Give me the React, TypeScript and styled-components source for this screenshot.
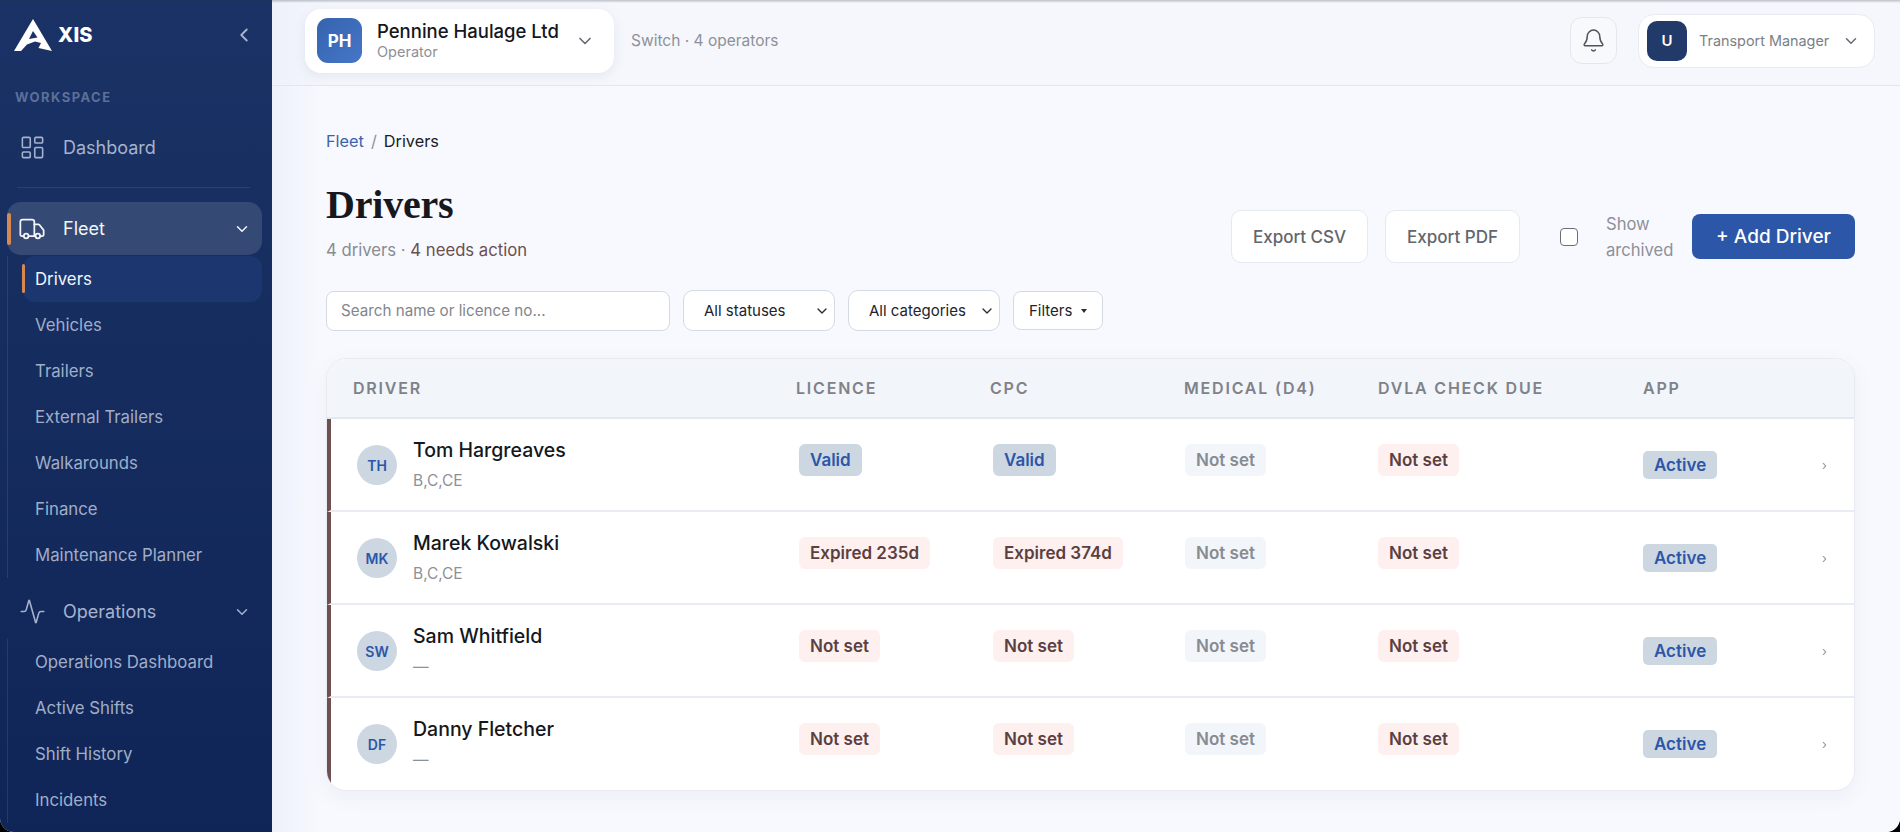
import React from 'react'
import styled, { createGlobalStyle } from 'styled-components'
import { Activity, Bell, ChevronDown, ChevronLeft, LayoutDashboard, Truck } from 'lucide-react'

const GlobalStyle = createGlobalStyle`
  html, body {
    margin: 0;
    padding: 0;
    height: 100%;
    background: #000;
    overflow: hidden;
  }
  * { box-sizing: border-box; }
  body { font-family: Inter, "Noto Sans", sans-serif; }
`

const Shell = styled.div`
  position: relative;
  display: flex;
  width: 1900px;
  height: 832px;
  overflow: hidden;
  border-radius: 0 0 14px 14px;
  background: #f8f9fe;

  &::after {
    content: '';
    position: absolute;
    inset: 0 0 auto 0;
    height: 3px;
    background: linear-gradient(rgba(40, 50, 70, 0.28), rgba(40, 50, 70, 0));
  }
`

const Sidebar = styled.aside`
  flex: 0 0 272px;
  display: flex;
  flex-direction: column;
  padding: 0 10px 0 7px;
  background: linear-gradient(180deg, #1a3265 0%, #102557 100%);
  overflow: hidden;
`

const Brand = styled.div`
  display: flex;
  flex: 0 0 66px;
  align-items: center;
  justify-content: space-between;
  padding: 4px 7px 0 7px;
  color: #fff;
`

const BrandLogo = styled.div`
  display: flex;
  align-items: center;
  gap: 5px;
`

const BrandName = styled.span`
  font-size: 20px;
  font-weight: 800;
  letter-spacing: 0.2px;
`

const Collapse = styled.span`
  display: flex;
  color: #a9b5cd;
`

const SectionLabel = styled.div`
  margin: 23px 0 16px;
  padding-left: 8px;
  font-size: 13px;
  line-height: 16px;
  font-weight: 700;
  letter-spacing: 1.45px;
  color: #5c7099;
`

const TopItem = styled.div<{ $active?: boolean }>`
  position: relative;
  display: flex;
  flex: 0 0 53px;
  align-items: center;
  padding-left: 11px;
  border-radius: 14px;
  font-size: 18px;
  color: ${({ $active }) => ($active ? '#f3f5fa' : '#a7b3cd')};
  background: ${({ $active }) => ($active ? 'rgba(255, 255, 255, 0.13)' : 'transparent')};

  &::before {
    content: ${({ $active }) => ($active ? "''" : 'none')};
    position: absolute;
    left: 0;
    top: 11px;
    width: 4px;
    height: 32px;
    border-radius: 2px;
    background: #d9894f;
  }
`

const TopIcon = styled.span`
  display: flex;
  justify-content: center;
  width: 28px;
  margin-right: 17px;
`

const Caret = styled.span`
  margin-left: auto;
  margin-right: 11px;
  display: flex;
`

const Divider = styled.div`
  flex: 0 0 1px;
  margin: 13px 12px 14px 10px;
  background: rgba(255, 255, 255, 0.09);
`

const SubList = styled.div`
  display: flex;
  flex-direction: column;
  flex-shrink: 0;
  margin: 1px 0 7px;
  padding-left: 15px;
  border-left: 1px solid rgba(255, 255, 255, 0.09);
`

const SubItem = styled.div<{ $active?: boolean }>`
  position: relative;
  display: flex;
  flex: 0 0 46px;
  align-items: center;
  padding-left: 12px;
  border-radius: 12px;
  font-size: 16.8px;
  color: ${({ $active }) => ($active ? '#f3f5fa' : '#a0aec8')};
  background: ${({ $active }) => ($active ? '#1c3770' : 'transparent')};

  &::before {
    content: ${({ $active }) => ($active ? "''" : 'none')};
    position: absolute;
    left: -1px;
    top: 8px;
    width: 3px;
    height: 29px;
    border-radius: 2px;
    background: #d9894f;
  }
`

const Main = styled.div`
  flex: 1;
  display: flex;
  flex-direction: column;
  min-width: 0;
  background: linear-gradient(90deg, #eef1fb 0, #f8f9fe 50px);
`

const Topbar = styled.header`
  display: flex;
  align-items: center;
  flex: 0 0 86px;
  padding: 0 25px 4px 33px;
  background: linear-gradient(90deg, #eef1fa 0, #f5f7fc 60px);
  border-bottom: 1px solid #e2e6ef;
`

const Switcher = styled.div`
  display: flex;
  align-items: center;
  width: 309px;
  height: 64px;
  padding: 0 19px 0 12px;
  border-radius: 16px;
  background: #fff;
  box-shadow: 0 3px 12px rgba(70, 90, 140, 0.1);
`

const SwitcherAvatar = styled.div`
  display: flex;
  align-items: center;
  justify-content: center;
  width: 45px;
  height: 45px;
  margin-right: 15px;
  border-radius: 11px;
  background: linear-gradient(135deg, #3563ae, #4676c8);
  color: #fff;
  font-size: 17px;
  font-weight: 700;
`

const SwitcherText = styled.div`
  flex: 1;
  display: flex;
  flex-direction: column;
`

const SwitcherName = styled.span`
  font-size: 18.5px;
  line-height: 23px;
  font-weight: 500;
  color: #15171c;
`

const SwitcherRole = styled.span`
  font-size: 14.5px;
  line-height: 18px;
  color: #8d9098;
`

const SwitchHint = styled.span`
  margin-left: 17px;
  font-size: 15.5px;
  color: #8d9199;
`

const TopRight = styled.div`
  margin-left: auto;
  display: flex;
  align-items: center;
  gap: 21px;
`

const BellButton = styled.div`
  display: flex;
  align-items: center;
  justify-content: center;
  width: 47px;
  height: 47px;
  border: 1px solid #e3e7ef;
  border-radius: 12px;
  background: #f8f9fd;
  color: #4f535b;
`

const ProfileButton = styled.div`
  display: flex;
  align-items: center;
  width: 237px;
  height: 54px;
  padding: 0 14px 0 8px;
  border: 1px solid #e8ebf2;
  border-radius: 16px;
  background: #fff;
  color: #777b83;
`

const ProfileAvatar = styled.div`
  display: flex;
  align-items: center;
  justify-content: center;
  width: 40px;
  height: 40px;
  margin-right: 12px;
  border-radius: 10px;
  background: #213a69;
  color: #fff;
  font-size: 15px;
  font-weight: 600;
`

const ProfileName = styled.span`
  flex: 1;
  font-size: 14.4px;
  color: #7b7f87;
`

const Content = styled.main`
  flex: 1;
  display: flex;
  flex-direction: column;
  padding: 44px 45px 0 54px;
`

const Breadcrumb = styled.nav`
  display: flex;
  gap: 7px;
  font-size: 16.3px;
  line-height: 22px;
  color: #1b1d22;
`

const CrumbLink = styled.span`
  color: #3b62ab;
`

const CrumbSep = styled.span`
  color: #8d9199;
`

const PageHead = styled.div`
  display: flex;
  align-items: flex-end;
  justify-content: space-between;
  margin-top: 28px;
`

const PageTitle = styled.h1`
  margin: 0;
  font-family: "Liberation Serif", serif;
  font-size: 40px;
  line-height: 50px;
  font-weight: 700;
  letter-spacing: -0.2px;
  color: #16181d;
`

const PageSub = styled.div`
  margin-top: 8px;
  font-size: 16.7px;
  line-height: 24px;
  color: #888b92;
`

const NeedsAction = styled.span`
  color: #6b4f50;
`

const Actions = styled.div`
  display: flex;
  align-items: center;
  gap: 17px;
  margin-bottom: -1px;
`

const GhostButton = styled.button`
  height: 53px;
  padding: 0 21px;
  border: 1px solid #e6e9f0;
  border-radius: 10px;
  background: #fff;
  font: 500 17px Inter, sans-serif;
  color: #63666d;
`

const ArchivedToggle = styled.label`
  display: flex;
  align-items: center;
  margin-left: 23px;
  margin-right: -1px;
`

const CheckBox = styled.span`
  width: 18px;
  height: 18px;
  margin-right: 28px;
  border: 1.5px solid #6b6e75;
  border-radius: 4px;
  background: #fff;
`

const ArchivedText = styled.span`
  width: 70px;
  font-size: 16.6px;
  line-height: 26px;
  color: #8d9098;
`

const PrimaryButton = styled.button`
  height: 45px;
  width: 163px;
  border: 0;
  border-radius: 8px;
  background: #2c56a8;
  font: 500 19px Inter, sans-serif;
  color: #fff;
`

const FilterRow = styled.div`
  display: flex;
  align-items: center;
  gap: 13px;
  margin-top: 28px;
`

const SearchBox = styled.div`
  display: flex;
  align-items: center;
  width: 344px;
  height: 40px;
  padding-left: 14px;
  border: 1px solid #d5d9e3;
  border-radius: 8px;
  background: #fff;
  font-size: 15.2px;
  color: #83868d;
`

const FilterSelect = styled.div<{ $width: number }>`
  display: flex;
  align-items: center;
  justify-content: space-between;
  width: ${({ $width }) => $width}px;
  height: 41px;
  padding: 0 4px 0 20px;
  border: 1px solid #d5d9e3;
  border-radius: 10px;
  background: #fff;
  font-size: 15px;
  color: #22242a;
`

const FilterButton = styled.div`
  display: flex;
  align-items: center;
  gap: 9px;
  height: 39px;
  padding: 0 15px;
  border: 1px solid #d5d9e3;
  border-radius: 8px;
  background: #fff;
  font-size: 15px;
  color: #22242a;
`

const FilterCaret = styled.span`
  width: 0;
  height: 0;
  border-left: 3.5px solid transparent;
  border-right: 3.5px solid transparent;
  border-top: 4px solid #2b2d33;
`

const TableCard = styled.section`
  margin-top: 27px;
  border: 1px solid #e8ebf2;
  border-radius: 20px;
  background: #fff;
  box-shadow: 0 6px 20px rgba(80, 100, 160, 0.07);
  overflow: hidden;
`

const HeadRow = styled.div`
  display: grid;
  grid-template-columns: 443px 194px 194px 194px 265px 1fr 48px;
  align-items: center;
  height: 60px;
  background: #f2f5fa;
  border-bottom: 2px solid #e2e7f0;
`

const HeadCell = styled.div`
  padding-left: 26px;
  font-size: 16px;
  font-weight: 600;
  letter-spacing: 1.8px;
  color: #7f8289;
`

const BodyRow = styled.div`
  display: grid;
  grid-template-columns: 439px 194px 192px 193px 268px 1fr 46px;
  height: 93px;
  border-left: 4px solid #6e4f52;
  border-bottom: 2px solid #e9ecf2;

  &:last-child {
    height: 92px;
    border-bottom: 0;
  }
`

const DriverCell = styled.div`
  display: flex;
  align-items: flex-start;
  padding: 26px 0 0 26px;
`

const Initials = styled.div`
  display: flex;
  align-items: center;
  justify-content: center;
  width: 40px;
  height: 40px;
  margin-right: 16px;
  border-radius: 50%;
  background: #ccd7e2;
  color: #2c56a8;
  font-size: 14px;
  font-weight: 600;
`

const DriverText = styled.div`
  display: flex;
  flex-direction: column;
  margin-top: -10px;
`

const DriverName = styled.span`
  font-size: 19.5px;
  line-height: 30px;
  font-weight: 500;
  color: #15171c;
`

const DriverCats = styled.span`
  margin-top: 2px;
  font-size: 15.5px;
  line-height: 28px;
  color: #8d9098;
`

const StatusCell = styled.div`
  padding: 25px 0 0 29px;
`

const tones = {
  valid: { bg: '#ccd7e2', fg: '#2c56a8' },
  danger: { bg: '#fdf0ef', fg: '#5b3f42' },
  muted: { bg: '#f2f5fa', fg: '#888b92' },
}

const Badge = styled.span<{ $tone: keyof typeof tones }>`
  display: inline-flex;
  align-items: center;
  height: 32px;
  padding: 0 11px;
  border-radius: 6px;
  font-size: 17px;
  font-weight: 600;
  background: ${({ $tone }) => tones[$tone].bg};
  color: ${({ $tone }) => tones[$tone].fg};
`

const AppCell = styled.div`
  display: flex;
  align-items: center;
  padding-left: 26px;
`

const AppBadge = styled.span`
  display: inline-flex;
  align-items: center;
  height: 28px;
  padding: 0 11px;
  border-radius: 5px;
  background: #ccd7e2;
  color: #2c56a8;
  font-size: 17px;
  font-weight: 600;
`

const RowArrow = styled.div`
  display: flex;
  align-items: center;
  padding-left: 14px;
  color: #777a82;
  font-size: 13px;
  font-weight: 300;
`

const AxisMark = () => (
  <svg width="39" height="33" viewBox="0 0 39 33" aria-hidden="true">
    <path
      fill="#fff"
      fillRule="evenodd"
      d="M19 0 38 32 24.5 29 27 24 21 22.5 13 25.5 7 32 0 32ZM19 12 15 20 23.5 18.5Z"
    />
  </svg>
)

const fleetItems = ['Vehicles', 'Trailers', 'External Trailers', 'Walkarounds', 'Finance', 'Maintenance Planner']
const opsItems = ['Operations Dashboard', 'Active Shifts', 'Shift History', 'Incidents']

type Tone = keyof typeof tones

type Driver = {
  initials: string
  name: string
  cats: string
  licence: [string, Tone]
  cpc: [string, Tone]
}

const drivers: Driver[] = [
  { initials: 'TH', name: 'Tom Hargreaves', cats: 'B,C,CE', licence: ['Valid', 'valid'], cpc: ['Valid', 'valid'] },
  { initials: 'MK', name: 'Marek Kowalski', cats: 'B,C,CE', licence: ['Expired 235d', 'danger'], cpc: ['Expired 374d', 'danger'] },
  { initials: 'SW', name: 'Sam Whitfield', cats: '—', licence: ['Not set', 'danger'], cpc: ['Not set', 'danger'] },
  { initials: 'DF', name: 'Danny Fletcher', cats: '—', licence: ['Not set', 'danger'], cpc: ['Not set', 'danger'] },
]

export default function App() {
  return (
    <Shell>
      <GlobalStyle />
      <Sidebar>
        <Brand>
          <BrandLogo>
            <AxisMark />
            <BrandName>XIS</BrandName>
          </BrandLogo>
          <Collapse>
            <ChevronLeft size={22} strokeWidth={2} />
          </Collapse>
        </Brand>
        <SectionLabel>WORKSPACE</SectionLabel>
        <TopItem>
          <TopIcon>
            <LayoutDashboard size={27} strokeWidth={1.4} />
          </TopIcon>
          Dashboard
        </TopItem>
        <Divider />
        <TopItem $active>
          <TopIcon>
            <Truck size={28} strokeWidth={1.5} />
          </TopIcon>
          Fleet
          <Caret>
            <ChevronDown size={18} strokeWidth={2} />
          </Caret>
        </TopItem>
        <SubList>
          <SubItem $active>Drivers</SubItem>
          {fleetItems.map((item) => (
            <SubItem key={item}>{item}</SubItem>
          ))}
        </SubList>
        <TopItem>
          <TopIcon>
            <Activity size={27} strokeWidth={1.4} />
          </TopIcon>
          Operations
          <Caret>
            <ChevronDown size={18} strokeWidth={2} />
          </Caret>
        </TopItem>
        <SubList>
          {opsItems.map((item) => (
            <SubItem key={item}>{item}</SubItem>
          ))}
        </SubList>
      </Sidebar>
      <Main>
        <Topbar>
          <Switcher>
            <SwitcherAvatar>PH</SwitcherAvatar>
            <SwitcherText>
              <SwitcherName>Pennine Haulage Ltd</SwitcherName>
              <SwitcherRole>Operator</SwitcherRole>
            </SwitcherText>
            <ChevronDown size={20} color="#666a72" strokeWidth={2} />
          </Switcher>
          <SwitchHint>Switch · 4 operators</SwitchHint>
          <TopRight>
            <BellButton>
              <Bell size={25} strokeWidth={1.4} />
            </BellButton>
            <ProfileButton>
              <ProfileAvatar>U</ProfileAvatar>
              <ProfileName>Transport Manager</ProfileName>
              <ChevronDown size={18} color="#666a72" strokeWidth={2} />
            </ProfileButton>
          </TopRight>
        </Topbar>
        <Content>
          <Breadcrumb>
            <CrumbLink>Fleet</CrumbLink>
            <CrumbSep>/</CrumbSep>
            <span>Drivers</span>
          </Breadcrumb>
          <PageHead>
            <div>
              <PageTitle>Drivers</PageTitle>
              <PageSub>
                4 drivers · <NeedsAction>4 needs action</NeedsAction>
              </PageSub>
            </div>
            <Actions>
              <GhostButton>Export CSV</GhostButton>
              <GhostButton>Export PDF</GhostButton>
              <ArchivedToggle>
                <CheckBox />
                <ArchivedText>Show archived</ArchivedText>
              </ArchivedToggle>
              <PrimaryButton>+ Add Driver</PrimaryButton>
            </Actions>
          </PageHead>
          <FilterRow>
            <SearchBox>Search name or licence no...</SearchBox>
            <FilterSelect $width={152}>
              All statuses
              <ChevronDown size={16} color="#2b2d33" strokeWidth={2} />
            </FilterSelect>
            <FilterSelect $width={152}>
              All categories
              <ChevronDown size={16} color="#2b2d33" strokeWidth={2} />
            </FilterSelect>
            <FilterButton>
              Filters
              <FilterCaret />
            </FilterButton>
          </FilterRow>
          <TableCard>
            <HeadRow>
              <HeadCell>DRIVER</HeadCell>
              <HeadCell>LICENCE</HeadCell>
              <HeadCell>CPC</HeadCell>
              <HeadCell>MEDICAL (D4)</HeadCell>
              <HeadCell>DVLA CHECK DUE</HeadCell>
              <HeadCell>APP</HeadCell>
              <HeadCell />
            </HeadRow>
            {drivers.map((driver) => (
              <BodyRow key={driver.name}>
                <DriverCell>
                  <Initials>{driver.initials}</Initials>
                  <DriverText>
                    <DriverName>{driver.name}</DriverName>
                    <DriverCats>{driver.cats}</DriverCats>
                  </DriverText>
                </DriverCell>
                <StatusCell>
                  <Badge $tone={driver.licence[1]}>{driver.licence[0]}</Badge>
                </StatusCell>
                <StatusCell>
                  <Badge $tone={driver.cpc[1]}>{driver.cpc[0]}</Badge>
                </StatusCell>
                <StatusCell>
                  <Badge $tone="muted">Not set</Badge>
                </StatusCell>
                <StatusCell>
                  <Badge $tone="danger">Not set</Badge>
                </StatusCell>
                <AppCell>
                  <AppBadge>Active</AppBadge>
                </AppCell>
                <RowArrow>›</RowArrow>
              </BodyRow>
            ))}
          </TableCard>
        </Content>
      </Main>
    </Shell>
  )
}
